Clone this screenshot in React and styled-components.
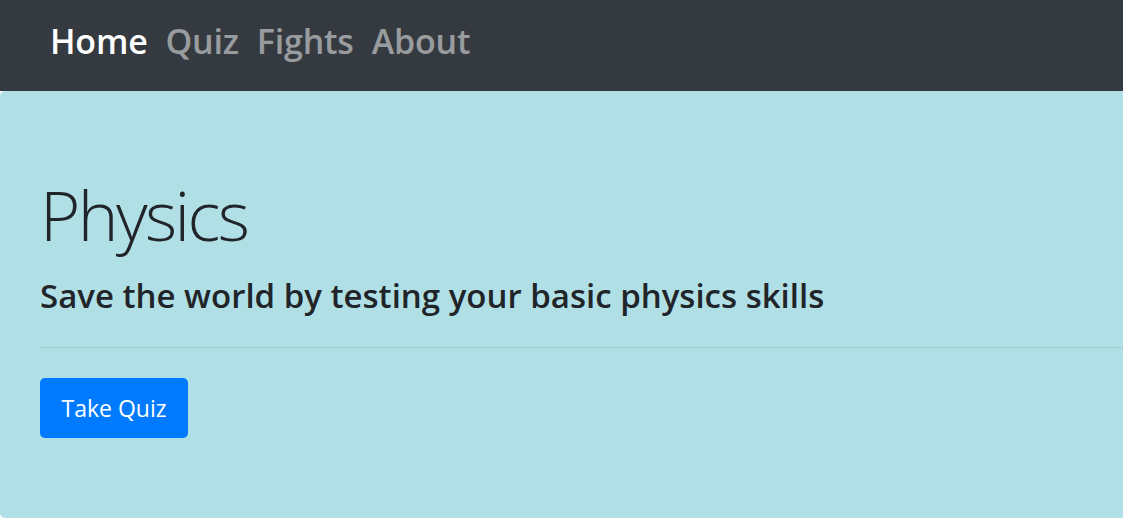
import React from "react";
import styled, { createGlobalStyle } from "styled-components";

const GlobalStyle = createGlobalStyle`
  html, body {
    margin: 0;
    background: #fff;
    overflow: hidden;
    font-family: "Open Sans", "Noto Sans", sans-serif;
    color: #212529;
  }
`;

const NavBar = styled.nav`
  height: 91px;
  background: #343a40;
  display: flex;
  align-items: center;
  padding: 0 0 9px 50px;
  box-sizing: border-box;
  gap: 18px;
`;

const NavLink = styled.a`
  font-size: 34px;
  font-weight: 600;
  letter-spacing: -0.2px;
  color: ${(p) => (p.active ? "#fff" : "rgba(255, 255, 255, 0.5)")};
  text-decoration: none;
`;

const Jumbotron = styled.section`
  background: #b0e0e6;
  height: 427px;
  border-radius: 5px 0 0 5px;
  padding: 89px 0 0 40px;
  box-sizing: border-box;
`;

const Title = styled.h1`
  margin: 0;
  font-size: 69px;
  font-weight: 300;
  line-height: 1;
  letter-spacing: -2.6px;
`;

const Lead = styled.p`
  margin: 27px 0 0;
  font-size: 33px;
  font-weight: 600;
  line-height: 1.2;
`;

const Rule = styled.hr`
  margin: 31px 0 30px;
  border: 0;
  border-top: 1px solid rgba(0, 0, 0, 0.1);
`;

const Button = styled.button`
  width: 148px;
  height: 60px;
  border: 0;
  border-radius: 5px;
  background: #007bff;
  color: #fff;
  font-family: inherit;
  font-size: 23px;
  padding: 0;
  cursor: pointer;
`;

export default function App() {
  const links = ["Home", "Quiz", "Fights", "About"];
  return (
    <>
      <GlobalStyle />
      <NavBar>
        {links.map((l, i) => (
          <NavLink key={l} href="#" active={i === 0}>
            {l}
          </NavLink>
        ))}
      </NavBar>
      <Jumbotron>
        <Title>Physics</Title>
        <Lead>Save the world by testing your basic physics skills</Lead>
        <Rule />
        <Button>Take Quiz</Button>
      </Jumbotron>
    </>
  );
}
